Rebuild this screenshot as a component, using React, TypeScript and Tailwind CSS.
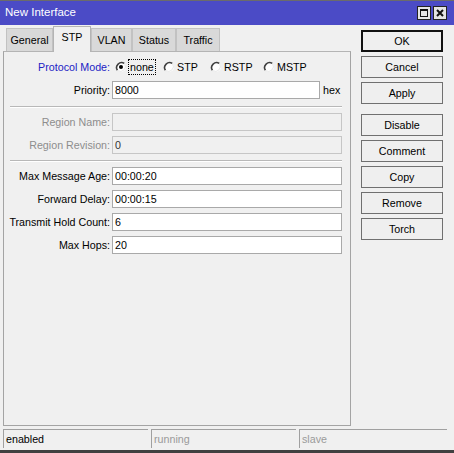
import React from "react";

function Radio({ checked }: { checked?: boolean }) {
  return (
    <svg width="12" height="12" viewBox="0 0 12 12" className="shrink-0">
      <circle cx="6" cy="6" r="5" fill="#ffffff" />
      <path d="M9.3 2.4 A5 5 0 0 0 2.4 9.3" fill="none" stroke="#404040" strokeWidth="1.6" />
      <path d="M9.6 2.7 A5 5 0 0 1 2.7 9.6" fill="none" stroke="#e8e8e8" strokeWidth="1" />
      {checked && <circle cx="6" cy="6" r="2" fill="#000000" />}
    </svg>
  );
}

function Field({
  label,
  value,
  disabled,
  mt,
}: {
  label: string;
  value: string;
  disabled?: boolean;
  mt: string;
}) {
  return (
    <div className={`flex items-center h-[18px] ${mt}`}>
      <div className={`w-[106px] shrink-0 text-right ${disabled ? "text-[#8d8d8d]" : "text-black"}`}>{label}</div>
      <div
        className={`ml-[2px] mr-[8px] flex-1 h-[18px] border flex items-center pl-[2px] ${
          disabled ? "bg-[#f0f0f0] border-[#c6c6c6] text-[#333]" : "bg-white border-[#a9a9a9] text-black"
        }`}
      >
        {value}
      </div>
    </div>
  );
}

function Btn({ label, mt, def }: { label: string; mt: string; def?: boolean }) {
  return (
    <div
      className={`w-[82px] h-[22px] flex items-center justify-center bg-[#efefef] ${mt} ${
        def ? "border-2 border-[#111]" : "border border-[#707070]"
      }`}
    >
      {label}
    </div>
  );
}

export default function App() {
  const tabs = [
    { name: "General", w: "w-[47px]" },
    { name: "STP", w: "w-[38px]", sel: true },
    { name: "VLAN", w: "w-[41px]" },
    { name: "Status", w: "w-[44px]" },
    { name: "Traffic", w: "w-[44px]" },
  ];
  return (
    <div className="w-[454px] h-[453px] bg-[#f0f0f0] flex flex-col text-[10.7px] leading-none font-['Liberation_Sans',Arial,sans-serif] text-black overflow-hidden">
      <div className="h-[1px] bg-[#6b6b6b]" />
      <div className="h-[24px] bg-[#4b4bc6] flex items-center pl-[5px] pr-[7px] text-white text-[11.5px]">
        <span className="flex-1">New Interface</span>
        <div className="flex gap-[2px]">
          <div className="w-[14px] h-[14px] bg-[#e4e4e4] border border-[#222] flex items-center justify-center">
            <div className="w-[8px] h-[8px] border border-[#111] border-t-2" />
          </div>
          <div className="w-[14px] h-[14px] bg-[#e4e4e4] border border-[#222] flex items-center justify-center">
            <svg width="8" height="8" viewBox="0 0 8 8">
              <path d="M1 1 L7 7 M7 1 L1 7" stroke="#111" strokeWidth="2" />
            </svg>
          </div>
        </div>
      </div>

      <div className="h-[401px] flex">
        <div className="ml-[3px] w-[348px] flex flex-col">
          <div className="h-[26px] flex items-end pl-[3px]">
            {tabs.map((t) =>
              t.sel ? (
                <div
                  key={t.name}
                  className={`${t.w} h-[26px] -mb-px relative z-10 bg-[#f0f0f0] border-t border-l border-r border-[#b4b4b4] flex items-center justify-center pb-[4px]`}
                >
                  {t.name}
                </div>
              ) : (
                <div
                  key={t.name}
                  className={`${t.w} h-[23px] bg-[#d9d9d9] border-t border-l border-r border-[#c2c2c2] flex items-center justify-center pt-[1px]`}
                >
                  {t.name}
                </div>
              )
            )}
          </div>
          <div className="flex-1 border border-[#a4a4a4] border-t-[#b4b4b4] flex flex-col">
            <div className="flex items-center h-[18px] mt-[6px]">
              <div className="w-[106px] shrink-0 text-right text-[#2222c4]">Protocol Mode:</div>
              <div className="ml-[5px] flex items-center">
                <div className="w-[48px] flex items-center">
                  <Radio checked />
                  <span className="ml-[1px] border border-dotted border-black px-[1px] py-[2px]">none</span>
                </div>
                <div className="w-[47px] flex items-center">
                  <Radio />
                  <span className="ml-[2px]">STP</span>
                </div>
                <div className="w-[53px] flex items-center">
                  <Radio />
                  <span className="ml-[2px]">RSTP</span>
                </div>
                <div className="flex items-center">
                  <Radio />
                  <span className="ml-[2px]">MSTP</span>
                </div>
              </div>
            </div>
            <div className="flex items-center h-[18px] mt-[5px]">
              <div className="w-[106px] shrink-0 text-right">Priority:</div>
              <div className="ml-[2px] w-[208px] h-[18px] border border-[#a9a9a9] bg-white flex items-center pl-[2px]">8000</div>
              <span className="ml-[3px]">hex</span>
            </div>
            <div className="mt-[7px] ml-[6px] mr-[8px] h-[1px] bg-[#b8b8b8] border-b border-white box-content" />
            <Field label="Region Name:" value="" disabled mt="mt-[5px]" />
            <Field label="Region Revision:" value="0" disabled mt="mt-[5px]" />
            <div className="mt-[6px] ml-[6px] mr-[8px] h-[1px] bg-[#b8b8b8] border-b border-white box-content" />
            <Field label="Max Message Age:" value="00:00:20" mt="mt-[5px]" />
            <Field label="Forward Delay:" value="00:00:15" mt="mt-[5px]" />
            <Field label="Transmit Hold Count:" value="6" mt="mt-[5px]" />
            <Field label="Max Hops:" value="20" mt="mt-[5px]" />
          </div>
        </div>
        <div className="ml-[10px] flex flex-col">
          <Btn label="OK" mt="mt-[5px]" def />
          <Btn label="Cancel" mt="mt-[4px]" />
          <Btn label="Apply" mt="mt-[4px]" />
          <Btn label="Disable" mt="mt-[10px]" />
          <Btn label="Comment" mt="mt-[4px]" />
          <Btn label="Copy" mt="mt-[4px]" />
          <Btn label="Remove" mt="mt-[4px]" />
          <Btn label="Torch" mt="mt-[4px]" />
        </div>
      </div>

      <div className="mt-[3px] h-[19px] flex pl-[3px] pr-[7px] gap-[3px]">
        <div className="w-[145px] border-t border-l border-[#a0a0a0] flex items-center pl-[2px] pt-[1px]">enabled</div>
        <div className="w-[145px] border-t border-l border-[#a0a0a0] flex items-center pl-[2px] pt-[1px] text-[#9a9a9a]">running</div>
        <div className="flex-1 border-t border-l border-[#a0a0a0] flex items-center pl-[2px] pt-[1px] text-[#9a9a9a]">slave</div>
      </div>
      <div className="mt-[2px] h-[3px] bg-[#404040]" />
    </div>
  );
}
